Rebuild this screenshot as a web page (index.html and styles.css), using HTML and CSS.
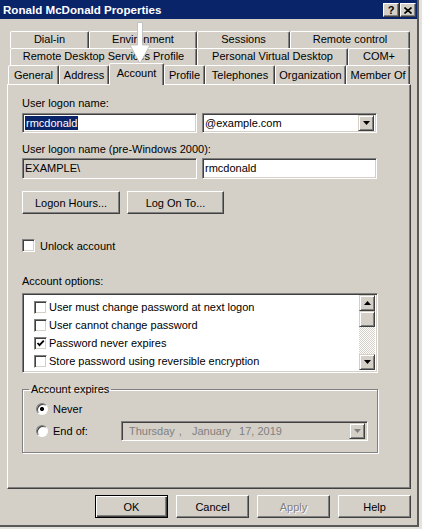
FILE: index.html
```html
<!DOCTYPE html>
<html lang="en">
<head>
    <meta charset="UTF-8">
    <title>Ronald McDonald Properties</title>
    <link rel="stylesheet" href="styles.css">
</head>
<body>
    <div class="window">
        <div class="titlebar">
            <span class="title">Ronald McDonald Properties</span>
            <div class="title-btns">
                <span class="tbtn">?</span>
                <span class="tbtn">
                    <svg width="8" height="7" viewBox="0 0 8 7"><path d="M0.5 0.5 L7.5 6.5 M7.5 0.5 L0.5 6.5" stroke="#000" stroke-width="1.6"/></svg>
                </span>
            </div>
        </div>

        <div class="tabs">
            <div class="tab-row row1">
                <div class="tab">Dial-in</div>
                <div class="tab">Environment</div>
                <div class="tab">Sessions</div>
                <div class="tab">Remote control</div>
            </div>
            <div class="tab-row row2">
                <div class="tab">Remote Desktop Services Profile</div>
                <div class="tab">Personal Virtual Desktop</div>
                <div class="tab">COM+</div>
            </div>
            <div class="tab-row row3">
                <div class="tab">General</div>
                <div class="tab">Address</div>
                <div class="tab active">Account</div>
                <div class="tab">Profile</div>
                <div class="tab">Telephones</div>
                <div class="tab">Organization</div>
                <div class="tab">Member Of</div>
            </div>
        </div>

        <div class="panel">
            <div class="label">User logon name:</div>
            <div class="field-row">
                <div class="edit"><span class="sel">rmcdonald</span></div>
                <div class="combo">
                    <span class="combo-text">@example.com</span>
                    <span class="drop"><svg width="7" height="4" viewBox="0 0 7 4"><path d="M0 0 H7 L3.5 4 Z" fill="#000"/></svg></span>
                </div>
            </div>

            <div class="label label-2">User logon name (pre-Windows 2000):</div>
            <div class="field-row row-tall">
                <div class="edit readonly">EXAMPLE\</div>
                <div class="edit">rmcdonald</div>
            </div>

            <div class="btn-row">
                <button class="btn btn-logon">Logon Hours...</button>
                <button class="btn btn-logon-to">Log On To...</button>
            </div>

            <div class="check-row unlock">
                <span class="chk"></span>
                <span>Unlock account</span>
            </div>

            <div class="label label-opts">Account options:</div>
            <div class="list">
                <div class="items">
                    <div class="opt"><span class="chk"></span>User must change password at next logon</div>
                    <div class="opt"><span class="chk"></span>User cannot change password</div>
                    <div class="opt"><span class="chk checked"><svg width="9" height="9" viewBox="0 0 9 9"><path d="M1.5 4 L3.5 6.2 L7.8 1.6" fill="none" stroke="#000" stroke-width="1.8"/></svg></span>Password never expires</div>
                    <div class="opt"><span class="chk"></span>Store password using reversible encryption</div>
                </div>
                <div class="vscroll">
                    <span class="sbtn"><svg width="7" height="4" viewBox="0 0 7 4"><path d="M0 4 H7 L3.5 0 Z" fill="#000"/></svg></span>
                    <span class="thumb"></span>
                    <span class="track"></span>
                    <span class="sbtn"><svg width="7" height="4" viewBox="0 0 7 4"><path d="M0 0 H7 L3.5 4 Z" fill="#000"/></svg></span>
                </div>
            </div>

            <fieldset class="group">
                <legend>Account expires</legend>
                <div class="radio-row">
                    <span class="radio on"></span>
                    <span>Never</span>
                </div>
                <div class="radio-row row-end">
                    <span class="radio"></span>
                    <span>End of:</span>
                    <div class="datepick">
                        <span>Thursday</span>
                        <span class="d-comma">,</span>
                        <span class="d-month">January</span>
                        <span class="d-day">17, 2019</span>
                        <span class="drop disabled"><svg width="7" height="4" viewBox="0 0 7 4"><path d="M0 0 H7 L3.5 4 Z" fill="#808080"/></svg></span>
                    </div>
                </div>
            </fieldset>
        </div>

        <div class="footer">
            <button class="btn btn-default">OK</button>
            <button class="btn">Cancel</button>
            <button class="btn" disabled>Apply</button>
            <button class="btn">Help</button>
        </div>

        <svg class="pointer" width="24" height="44" viewBox="0 0 24 44">
            <path d="M9.5 1.5 H14.5 V24 H22 L12 42.5 L2 24 H9.5 Z" fill="#fff" stroke="#b8b8b8" stroke-width="0.8"/>
        </svg>
    </div>
</body>
</html>
```

FILE: styles.css
```css
* {
    box-sizing: border-box;
}
body {
    margin: 0;
    background-color: #e4e2dc;
    font-family: "Liberation Sans", Arial, sans-serif;
    font-size: 11px;
    color: #000;
}
.window {
    position: relative;
    width: 419px;
    height: 527px;
    background-color: #d4d0c8;
    border-right: 2px solid #595959;
    border-bottom: 2px solid #595959;
}

/* title bar */
.titlebar {
    height: 19px;
    background-color: #0a246a;
    display: flex;
    align-items: center;
    padding: 0 1px 0 3px;
}
.title {
    color: #fff;
    font-weight: bold;
    font-size: 11.6px;
}
.title-btns {
    margin-left: auto;
    display: flex;
    gap: 1px;
    margin-top: 1px;
}
.tbtn {
    width: 16px;
    height: 14px;
    background-color: #d4d0c8;
    border: 1px solid;
    border-color: #fff #404040 #404040 #fff;
    box-shadow: inset -1px -1px #808080;
    font-weight: bold;
    font-size: 11px;
    line-height: 12px;
    text-align: center;
    display: flex;
    align-items: center;
    justify-content: center;
}

/* tabs */
.tabs {
    padding: 12px 0 0 10px;
}
.tab-row {
    display: flex;
    height: 17px;
}
.tab {
    height: 17px;
    background-color: #d4d0c8;
    border: 1px solid;
    border-bottom: none;
    border-color: #fff #404040 transparent #fff;
    box-shadow: inset -1px 0 #808080;
    border-radius: 2px 2px 0 0;
    text-align: center;
    line-height: 14px;
    white-space: nowrap;
}
.row1 .tab:nth-child(1) { width: 79px; }
.row1 .tab:nth-child(2) { width: 108px; }
.row1 .tab:nth-child(3) { width: 93px; }
.row1 .tab:nth-child(4) { width: 120px; }
.row2 .tab:nth-child(1) { width: 187px; }
.row2 .tab:nth-child(2) { width: 151px; }
.row2 .tab:nth-child(3) { width: 62px; }

.row3 {
    height: 19px;
    margin-left: -2px;
}
.row3 .tab {
    height: 19px;
    line-height: 18px;
}
.row3 .tab:nth-child(1) { width: 51px; }
.row3 .tab:nth-child(2) { width: 50px; }
.row3 .tab:nth-child(3) { width: 55px; }
.row3 .tab:nth-child(4) { width: 41px; }
.row3 .tab:nth-child(5) { width: 70px; }
.row3 .tab:nth-child(6) { width: 71px; }
.row3 .tab:nth-child(7) { width: 64px; }
.row3 .tab.active {
    position: relative;
    z-index: 2;
    height: 22px;
    margin-top: -2px;
    line-height: 18px;
}

/* tab page */
.panel {
    margin-left: 7px;
    width: 404px;
    height: 405px;
    border: 1px solid;
    border-color: #fff #404040 #404040 #fff;
    box-shadow: inset -1px -1px #808080;
    padding: 12px 0 0 14px;
}
.label {
    line-height: 13px;
    height: 13px;
}
.label-2 {
    margin-top: 10px;
}
.label-opts {
    margin-top: 23px;
}
.field-row {
    display: flex;
    gap: 5px;
    margin-top: 3px;
}
.row-tall {
    margin-top: 2px;
}
.edit,
.combo {
    width: 175px;
    height: 20px;
    background-color: #fff;
    border: 1px solid;
    border-color: #808080 #fff #fff #808080;
    box-shadow: inset 1px 1px #404040, inset -1px -1px #d4d0c8;
    padding: 0 2px;
    line-height: 18px;
    white-space: nowrap;
}
.row-tall .edit {
    height: 21px;
    line-height: 19px;
}
.edit.readonly {
    background-color: #d4d0c8;
}
.sel {
    background-color: #0a246a;
    color: #fff;
    padding: 1px 1px;
}
.combo {
    display: flex;
    align-items: center;
    padding-right: 2px;
}
.combo-text {
    flex: 1;
}
.drop {
    width: 16px;
    height: 16px;
    background-color: #d4d0c8;
    border: 1px solid;
    border-color: #d4d0c8 #404040 #404040 #d4d0c8;
    box-shadow: inset 1px 1px #fff, inset -1px -1px #808080;
    display: flex;
    align-items: center;
    justify-content: center;
}
.btn-row {
    display: flex;
    gap: 7px;
    margin-top: 12px;
}
.btn {
    width: 73px;
    height: 23px;
    background-color: #d4d0c8;
    border: 1px solid;
    border-color: #fff #404040 #404040 #fff;
    box-shadow: inset -1px -1px #808080;
    font-family: inherit;
    font-size: 11px;
    color: #000;
    padding: 0;
}
.btn-logon { width: 98px; }
.btn-logon-to { width: 97px; }
.btn-default {
    border-color: #000;
    box-shadow: inset 1px 1px #fff, inset -1px -1px #404040, inset -2px -2px #808080;
}
.btn:disabled {
    color: #808080;
    text-shadow: 1px 1px #fff;
}

/* checkboxes */
.check-row {
    display: flex;
    align-items: center;
    gap: 5px;
    height: 13px;
}
.unlock {
    margin-top: 25px;
}
.chk {
    width: 13px;
    height: 13px;
    flex: none;
    background-color: #fff;
    border: 1px solid;
    border-color: #808080 #fff #fff #808080;
    box-shadow: inset 1px 1px #404040, inset -1px -1px #d4d0c8;
    display: flex;
    align-items: center;
    justify-content: center;
}

/* account options list */
.list {
    display: flex;
    width: 356px;
    height: 80px;
    margin-top: 5px;
    background-color: #fff;
    border: 1px solid;
    border-color: #808080 #fff #fff #808080;
    box-shadow: inset 1px 1px #404040, inset -1px -1px #d4d0c8;
    padding: 1px 2px 2px 1px;
}
.items {
    flex: 1;
    padding: 3px 0 0 10px;
}
.opt {
    display: flex;
    align-items: center;
    gap: 2px;
    height: 18px;
    white-space: nowrap;
}
.vscroll {
    width: 16px;
    display: flex;
    flex-direction: column;
}
.sbtn,
.thumb {
    height: 16px;
    flex: none;
    background-color: #d4d0c8;
    border: 1px solid;
    border-color: #d4d0c8 #404040 #404040 #d4d0c8;
    box-shadow: inset 1px 1px #fff, inset -1px -1px #808080;
    display: flex;
    align-items: center;
    justify-content: center;
}
.track {
    flex: 1;
    background-image: conic-gradient(#fff 25%, #d4d0c8 0 50%, #fff 0 75%, #d4d0c8 0);
    background-size: 2px 2px;
}

/* account expires */
.group {
    width: 356px;
    margin: 10px 0 0 0;
    padding: 0 0 11px 0;
    border: 1px solid #808080;
    box-shadow: inset 1px 1px #fff, 1px 1px #fff;
    min-width: 0;
}
.group legend {
    margin-left: 6px;
    padding: 0 2px;
    line-height: 13px;
}
.radio-row {
    display: flex;
    align-items: center;
    gap: 5px;
    height: 20px;
    margin-top: 3px;
    padding-left: 13px;
}
.row-end {
    height: 21px;
    margin-top: 1px;
}
.radio {
    width: 12px;
    height: 12px;
    flex: none;
    border-radius: 50%;
    border: 1px solid;
    border-color: #808080 #fff #fff #808080;
    box-shadow: inset 1px 1px #404040;
    background-color: #fff;
}
.radio.on {
    background: radial-gradient(circle, #000 0 1.8px, #fff 2.3px);
}
.datepick {
    margin-left: auto;
    margin-right: 9px;
    width: 247px;
    height: 20px;
    background-color: #d4d0c8;
    border: 1px solid;
    border-color: #808080 #fff #fff #808080;
    box-shadow: inset 1px 1px #404040, inset -1px -1px #d4d0c8;
    display: flex;
    align-items: center;
    padding: 0 2px 0 7px;
    color: #808080;
    white-space: nowrap;
}
.d-comma { margin-left: 4px; }
.d-month { margin-left: 10px; }
.d-day { margin-left: 8px; }
.datepick .drop {
    margin-left: auto;
}

/* dialog buttons */
.footer {
    display: flex;
    justify-content: flex-end;
    gap: 8px;
    margin-top: 6px;
    padding-right: 6px;
}

/* white pointer drawn over the tabs */
.pointer {
    position: absolute;
    left: 128px;
    top: 21px;
}
```
